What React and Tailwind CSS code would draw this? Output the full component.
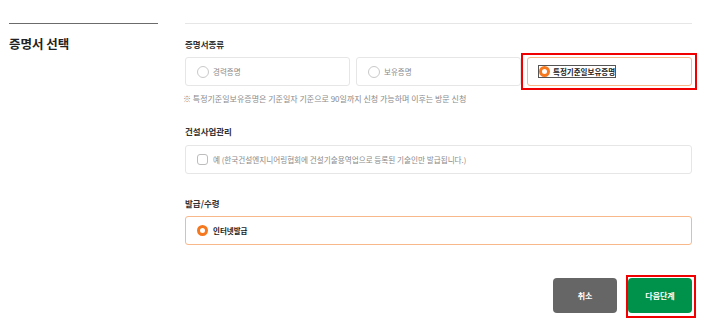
import { useState } from "react";

const font = { fontFamily: '"Noto Sans CJK KR", "Noto Sans", sans-serif' };

function Radio({ checked }) {
  return checked ? (
    <span className="inline-block h-[11px] w-[11px] shrink-0 rounded-full border-[3px] border-[#f5781e] bg-white" />
  ) : (
    <span className="inline-block h-[12px] w-[12px] shrink-0 rounded-full border-[1.5px] border-[#c9c9c9] bg-white" />
  );
}

export default function App() {
  const [kind, setKind] = useState("special");
  const [agree, setAgree] = useState(false);

  const kinds = [
    { id: "career", label: "경력증명" },
    { id: "own", label: "보유증명" },
    { id: "special", label: "특정기준일보유증명" },
  ];

  return (
    <div className="flex bg-white pl-[9px] pr-[16px] pt-[23px] pb-[16px]" style={font}>
      <div className="w-[149px] shrink-0 border-t border-[#6b6b6b]">
        <h2 className="mt-[12px] text-[12.5px] font-bold leading-[16px] text-[#222]">
          증명서 선택
        </h2>
      </div>

      <div className="ml-[27px] flex-1 border-t border-[#e6e6e6]">
        <p className="mt-[12px] text-[8.5px] font-semibold leading-[16px] text-[#333]">증명서종류</p>
        <div className="mt-[5px] grid grid-cols-3 gap-[6px]">
          {kinds.map((k) => {
            const on = kind === k.id;
            return (
              <button
                key={k.id}
                onClick={() => setKind(k.id)}
                className={`relative flex h-[29px] items-center rounded-[3px] border bg-white pl-[11px] text-left ${
                  on ? "border-[#f9b88a]" : "border-[#e6e6e6]"
                }`}
              >
                {on ? (
                  <span className="flex items-center gap-[3px] outline outline-1 outline-[#555]">
                    <Radio checked />
                    <span className="text-[7.5px] font-bold leading-[10px] text-[#222]">{k.label}</span>
                  </span>
                ) : (
                  <span className="flex items-center gap-[4px]">
                    <Radio />
                    <span className="text-[7.5px] leading-[10px] text-[#8a8a8a]">{k.label}</span>
                  </span>
                )}
                {on && (
                  <span className="pointer-events-none absolute -top-[5px] -bottom-[5px] -left-[7px] -right-[6px] border-2 border-[#f00000]" />
                )}
              </button>
            );
          })}
        </div>
        <p className="-ml-[2px] mt-[6px] text-[8px] leading-[14px] text-[#8a8a8a]">
          ※ 특정기준일보유증명은 기준일자 기준으로 90일까지 신청 가능하며 이후는 방문 신청
        </p>

        <p className="mt-[17px] text-[8.5px] font-semibold leading-[16px] text-[#333]">건설사업관리</p>
        <label className="mt-[6px] flex h-[29px] cursor-pointer items-center gap-[5px] rounded-[3px] border border-[#e6e6e6] bg-white pl-[11px]">
          <span
            onClick={() => setAgree(!agree)}
            className={`inline-block h-[11px] w-[11px] rounded-[3px] border ${
              agree ? "border-[#f5781e] bg-[#f5781e]" : "border-[#bdbdbd] bg-white"
            }`}
          />
          <span className="text-[7.6px] leading-[10px] text-[#8a8a8a]">
            예 (한국건설엔지니어링협회에 건설기술용역업으로 등록된 기술인만 발급됩니다.)
          </span>
        </label>

        <p className="mt-[21px] text-[8.5px] font-semibold leading-[16px] text-[#333]">발급/수령</p>
        <div className="mt-[5px] flex h-[29px] items-center gap-[5px] rounded-[3px] border border-[#f9b88a] bg-white pl-[11px]">
          <Radio checked />
          <span className="text-[7.5px] font-bold leading-[10px] text-[#222]">인터넷발급</span>
        </div>

        <div className="mt-[33px] flex justify-end gap-[11px]">
          <button className="h-[35px] w-[64px] rounded-[4px] bg-[#666666] text-[8px] font-bold text-white">
            취소
          </button>
          <button className="relative h-[35px] w-[64px] rounded-[4px] bg-[#00924a] text-[8px] font-bold text-white">
            다음단계
            <span className="pointer-events-none absolute -top-[3px] -bottom-[5px] -left-[2px] -right-[4px] border-2 border-[#f00000]" />
          </button>
        </div>
      </div>
    </div>
  );
}
